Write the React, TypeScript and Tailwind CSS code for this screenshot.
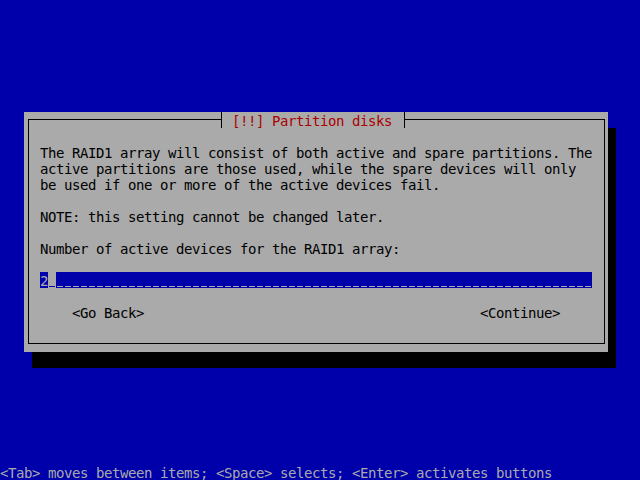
const mono = "font-['DejaVu_Sans_Mono',monospace] text-[14px] tracking-[-0.43px] leading-[19px]";

// one 16px text row of the console grid
function Row({ children, className = "" }: { children?: React.ReactNode; className?: string }) {
  return <div className={`h-[16px] whitespace-pre ${className}`}>{children}</div>;
}

export default function App() {
  return (
    <div className={`w-[640px] h-[480px] bg-[#0000aa] flex flex-col ${mono}`}>
      {/* dialog box with its drop shadow */}
      <div className="relative ml-[24px] mt-[112px] w-[584px] h-[240px] bg-[#aaaaaa] shadow-[8px_16px_0_0_#000] pt-[7px] pl-[4px] pr-[3px] pb-[8px]">
        <div className="h-full border border-black pl-[11px] pt-[24px] text-black">
          <Row>The RAID1 array will consist of both active and spare partitions. The</Row>
          <Row>active partitions are those used, while the spare devices will only</Row>
          <Row>be used if one or more of the active devices fail.</Row>
          <Row />
          <Row>NOTE: this setting cannot be changed later.</Row>
          <Row />
          <Row>Number of active devices for the RAID1 array:</Row>
          <Row />
          <Row className="flex">
            <span className="w-[8px] h-[16px] bg-[#0000aa] text-[#aaaaaa]">2</span>
            <span className="relative w-[8px] h-[16px] bg-[#aaaaaa]">
              <span className="absolute left-[1px] top-[14px] w-[6px] h-[1px] bg-[#0000aa]" />
            </span>
            <span className="relative w-[536px] h-[16px] bg-[#0000aa]">
              <span className="absolute left-0 right-0 top-[14px] h-[1px] bg-[repeating-linear-gradient(90deg,transparent_0_1px,#aaaaaa_1px_7px,transparent_7px_8px)]" />
            </span>
          </Row>
          <Row />
          <Row className="flex justify-between pl-[32px] pr-[44px]">
            <span>&lt;Go Back&gt;</span>
            <span>&lt;Continue&gt;</span>
          </Row>
        </div>

        {/* title sitting on the top border */}
        <div className="absolute top-0 left-[192px] h-[16px] flex bg-[#aaaaaa]">
          <div className="relative w-[8px] h-[16px]">
            <div className="absolute left-[5px] top-0 w-[1px] h-[16px] bg-black" />
            <div className="absolute left-0 top-[7px] w-[5px] h-[1px] bg-black" />
          </div>
          <span className="h-[16px] whitespace-pre text-[#aa0000]"> [!!] Partition disks </span>
          <div className="relative w-[8px] h-[16px]">
            <div className="absolute left-[4px] top-0 w-[1px] h-[16px] bg-black" />
            <div className="absolute left-[4px] top-[7px] w-[4px] h-[1px] bg-black" />
          </div>
        </div>
      </div>

      <Row className="mt-auto text-[#aaaaaa]">
        &lt;Tab&gt; moves between items; &lt;Space&gt; selects; &lt;Enter&gt; activates buttons
      </Row>
    </div>
  );
}
